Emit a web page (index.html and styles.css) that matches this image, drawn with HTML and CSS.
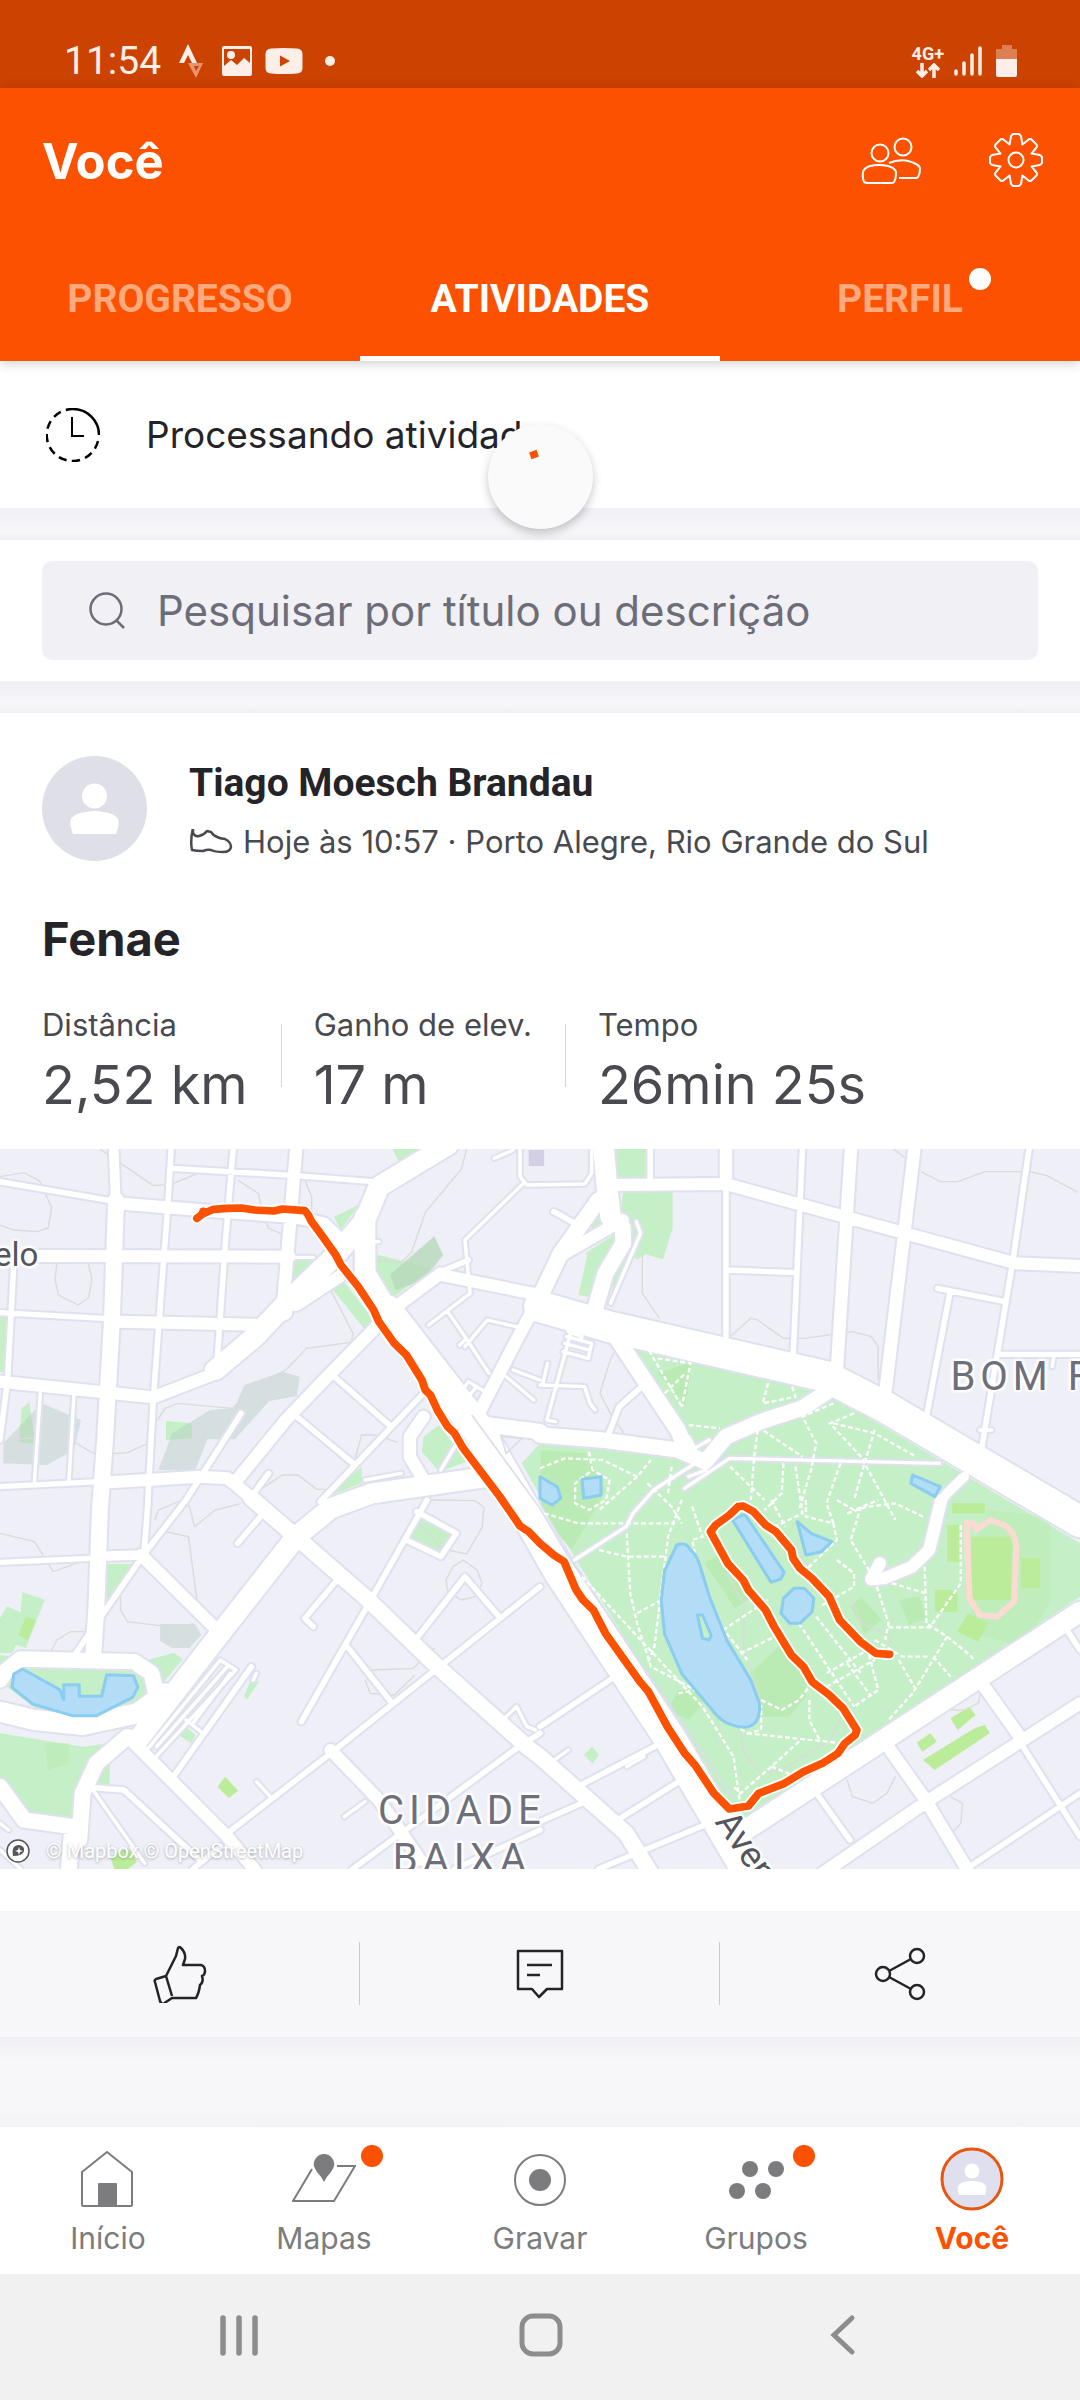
FILE: index.html
```
<!DOCTYPE html>
<html lang="pt-BR">
<head>
	<meta charset="utf-8">
	<meta name="viewport" content="width=device-width, initial-scale=1">
	<title>Você - Atividades</title>
	<link rel="stylesheet" href="styles.css">
</head>
<body>
<div class="app">

	<div class="status">
		<span class="clock">11:54</span>
		<svg class="ic-strava" width="24" height="34" viewBox="0 0 24 34"><path fill="#fdeee8" d="M9 0l9 19h-5L9 11l-4 8H0z"/><path fill="#e8936f" fill-rule="evenodd" d="M9 19h15l-7 15zm6 3l2 5 3-5z"/></svg>
		<svg class="ic-image" width="32" height="30" viewBox="0 0 32 30"><path fill="#fdeee8" fill-rule="evenodd" d="M3 0h26q2 0 2 2v26q0 2-2 2H3q-2 0-2-2V2q0-2 2-2zm0 3v17l7-6 6 5 7-7 6 5V3z"/><circle cx="10" cy="9" r="4" fill="#fdeee8"/></svg>
		<svg class="ic-tube" width="38" height="26" viewBox="0 0 38 26"><path fill="#fdeee8" fill-rule="evenodd" d="M6 0.500Q19-.5 32 .5 37.500 1 37.500 6v14q0 5-5.500 5.500-13 1-26 0Q.5 25 .5 20V6Q.5 1 6 .5zM15 7.500v11l10-5.500z"/></svg>
		<span class="more-dot"></span>
		<div class="status-right">
			<span class="net">4G+
				<svg width="24" height="15" viewBox="0 0 24 15"><path fill="none" stroke="#fdeee8" stroke-width="3.500" d="M6 0v12M1 8l5 5 5-5M18 15V3M13 7l5-5 5 5"/></svg>
			</span>
			<svg class="ic-signal" width="28" height="32" viewBox="0 0 28 32"><path stroke="#fdeee8" stroke-width="3.500" stroke-linecap="round" d="M2 26v3M10 18v11M18 10v19M26 3v26"/></svg>
			<svg class="ic-battery" width="22" height="34" viewBox="0 0 22 34"><path fill="#dd7f52" d="M6 1h10v4h4q1 0 1 1v10H0V6q0-1 1-1h5z"/><path fill="#fdeee8" d="M0 15h21v16q0 2-2 2H2q-2 0-2-2z"/></svg>
		</div>
	</div>

	<header class="header">
		<div class="top-row">
			<h1>Você</h1>
			<button class="icon-btn" aria-label="Amigos">
				<svg width="60" height="54" viewBox="1 2 60 54" fill="none" stroke="#fff" stroke-width="2"><circle cx="19" cy="20" r="8.500"/><circle cx="42" cy="14" r="8.500"/><path d="M4 50Q1 47 2 39q1-4 7-6 9-2 18 0 7 2 8 6 0 7-2 10-1 1-2 1H6q-1 0-2-1M28 30q14-6 27 1 4 2 4 5 0 5-2 8-1 1-2 1H38"/></svg>
			</button>
			<button class="icon-btn" aria-label="Configurações">
				<svg width="54" height="54" viewBox="-26 -25 54 54" fill="none" stroke="#fff" stroke-width="2" stroke-linejoin="round"><circle r="7.500"/><path d="M-6.400-15.500-5-24-3-26H3L5-24 6.400-15.500 12-20Q14-22 16-20L20-16Q22-14 20-12L15.500-6.400 24-5 26-3V3L24 5 15.500 6.400 20 12Q22 14 20 16L16 20Q14 22 12 20L6.400 15.500 5 24 3 26H-3L-5 24-6.400 15.500-12 20Q-14 22-16 20L-20 16Q-22 14-20 12L-15.500 6.400-24 5-26 3V-3L-24-5-15.500-6.400-20-12Q-22-14-20-16L-16-20Q-14-22-12-20Z"/></svg>
			</button>
		</div>
		<nav class="tabs">
			<a href="#progresso">PROGRESSO</a>
			<a href="#atividades" class="active">ATIVIDADES</a>
			<a href="#perfil"><span class="tab-label">PERFIL<i class="dot"></i></span></a>
		</nav>
	</header>

	<section class="processing">
		<svg width="54" height="54" viewBox="0 0 54 54" fill="none" stroke="#000" stroke-width="2.500"><path d="M27 1a26 26 0 0 1 26 26"/><path stroke-dasharray="8.200 5.400" d="M52 33A26 26 0 1 1 27 1"/><path stroke-width="2" d="M26 9v19h12"/></svg>
		<span>Processando atividade</span>
		<div class="spinner"><i></i></div>
	</section>

	<div class="gap"></div>

	<form class="search">
		<label class="search-box">
			<svg width="36" height="38" viewBox="0 0 36 38" fill="none" stroke="#6d6d78" stroke-width="2.500"><circle cx="17" cy="17" r="15.500"/><path d="M27 28l8 8"/></svg>
			<input type="text" aria-label="Pesquisar" placeholder="Pesquisar por título ou descrição">
		</label>
	</form>

	<div class="gap"></div>

	<article class="card">
		<div class="card-head">
			<svg class="avatar" viewBox="0 0 105 105"><circle cx="52.500" cy="52.500" r="52.500" fill="#dfdfe8"/><circle cx="52.500" cy="40" r="12.500" fill="#fff"/><path fill="#fff" d="M31 78q-4-10-2-15 4-7 23.500-8Q72 56 76 63q2 5-2 15z"/></svg>
			<div>
				<h2>Tiago Moesch Brandau</h2>
				<p class="when">
					<svg width="44" height="26" viewBox="0 0 44 26" fill="none" stroke="#494950" stroke-width="2.500" stroke-linejoin="round"><path d="M4 4q2 4 6 3 5-1 8-5l4 1q4 6 14 7 6 3 6 8-1 5-8 5-8 0-12-2-3-1-8 1-7 0-11-1-2-9 1-22z"/></svg>
					<span>Hoje às 10:57 · Porto Alegre, Rio Grande do Sul</span>
				</p>
			</div>
		</div>
		<h3>Fenae</h3>
		<dl class="stats">
			<div><dt>Distância</dt><dd>2,52 km</dd></div>
			<div><dt>Ganho de elev.</dt><dd>17 m</dd></div>
			<div><dt>Tempo</dt><dd>26min 25s</dd></div>
		</dl>
	</article>

	<div class="map">
		<svg viewBox="0 27 3136 2160" preserveAspectRatio="none">
			<!-- parks -->
			<g class="park">
				<path d="M1838 615L2410 765 2810 1010 3136 1210V1370L2150 2050 1673 1260 1515 970 1568 910 1950 950 2000 900z"/>
				<path d="M1785 27h95v90h-95zM1810 150h143v115l-28 93-50-15-25 15-60-50zM1755 180l-45 80 30 10zM1700 340l90-60-80 190-30-5 25-120zM1800 300l40-60 20 60-90 200z"/>
				<path d="M1140 27h75l-55 45zM970 230l70-35-50 75zM850 360h80l-80 85zM960 440l35-20 90 120-25 30zM1080 340l170 45-110 90-60-60zM1230 890l45-35 80 110-80 30-50-60zM1050 980v50l-100 40zM0 525h22l-8 170H0zM55 905l8-100 22-18 18 125zM482 843l75 7v45l-75 5z"/>
				<path d="M65 1357l65 22-55 145-28-10-12 25H0v-105l20-35 40 18zM0 1545l40 5-40 40zM310 1272h75l-75 110zM430 1560l75-22 25 20-60 75zM1215 1135l95 45-35 55-85-40zM708 1670l20-50 24 5-34 53zM518 1785l22-25 27 25-10 25zM275 1930l45-75-2 78z"/>
				<path d="M0 1780l240 40 80-10-80 110-15 120-60 0-70-15L0 1910z"/>
				<path d="M20 1640l30-70 130-10 190 20 65 50-40 80-140 40-120-20z"/>
				<path d="M1695 1845l25-25 20 25-20 25z"/>
			</g>
			<g class="wood">
				<path d="M1570 930l130 10 60 110-100 180-90-110zM1910 700l100-35-20 130z"/>
				<path d="M2180 1600l90-90 70 100v60l-50 60-90 0zM2045 1270l50-30 90 130-50 35zM2610 1380l60-10 20 65-50 20zM2470 1400l30-30 60 70-50 40zM1970 1650l60 0 10 40-40 50-60-30z"/>
				<path d="M2870 1110l180 20v250l-80 140-140-40-30-200z" opacity=".6"/>
				<path d="M1135 400l125-110 25 55-60 80-80 25zM130 1810h70v60l-60 20z" opacity=".7"/>
			</g>
			<g class="shade">
				<path d="M1132 405l130-117 25 57-55 75-82 30zM460 990l40-110 110-70 70-5 30-70 110-40 50 15-8 58-80 15-100 115h-80l-35 92zM10 910l110-120 115 50-20 90-80 45-125-5zM465 1452h100l20 32-35 40h-50l-35-22z"/>
			</g>
			<g class="pitch">
				<path d="M2765 1090h95v30h-95zM2750 1155h35v110h-35zM2715 1350h65v65h-65zM2820 1190h120l-5 190h-115zM2965 1255h55v90h-55zM2810 1420l60 30-30 55-60-30z"/>
				<path d="M2760 1735l55-35 18 25-52 45zM2662 1808l40-28 18 25-42 30zM2680 1860l150-95 30-10 14 25-160 110z"/>
				<path d="M75 1430l28 10-22 60-27-15zM632 1940l22-30 37 42-27 22zM320 2150l50-25 28 40-30 25h-35z"/>
			</g>

			<!-- contour lines -->
			<path class="contour" d="M290 27l70 50 85 60 55-5 80-35M0 110l70-12 45 25 35 80-10 60-30 12-70-5-40-15M165 370l-5 50 10 45 57 30 30-22 10-55-10-45M690 120l60 40 15 70 15 35 35 15M885 120l20 50v60M1355 27l-15 60-105 130-40 120-30 30-90-5M960 450l65 130-5 27-130 18-60 65-80 45-75 70-160-15-35 15-30 45M1030 960l20-75h40l65 22M740 1060l80-55h45l55 43h50M20 900l160-15 100 60 90-7 65-30M2595 27l30 25 35 22M2675 95l55 30 50 0 80-30h130l50 12 90 50M1865 340v120l50 75M2120 590l60-55 20 5 75 55h60l140-20 55 15 20 30v100M1787 630l-15 30-30 100 30 60 40 60M0 1180l100 25 55 90 80-30M450 1140l10-30 70-30 20 20 15 60 60-50 70-18M480 1175l67 15 25 190M350 1350v60l20 35 160 20 30-15M150 1530l15-30 40-25h45M1250 1080l130 2 25 20-5 60-45 80-70-15-80-90M1295 1320l20-40 30-20 40 30 15 40-20 40-40 10-40-25zM1080 1590l120-5 60-60M1060 1620l15 40 70 5 60-60M2730 1690l10 20 60 0 40-20 40-170M2460 1920l15 50 60 20 40-30 25-50M2760 1970l35 20-5 60-35 40M2150 1780l10 60 50 60 60-10 140-90 30-60M2110 1300l50 90v140l50 160M2310 1220l120 200M2470 1370l30 80 90 40-10 30"/>

			<!-- street network, drawn once as casing and once as fill -->
			<defs>
				<g id="streets">
					<path class="w90" d="M1568 500L1768 560 2400 710 2568 800 3136 1145M1120 510L1390 870 1628 1300 1948 1800 2168 2187"/>
					<path class="w60" d="M1300 15L1100 140 1060 240 980 340 840 480 740 590 625 690M1060 230L1060 400 1130 520M400 1800L640 1480 860 1190 960 1105 1080 1060 1420 1010M0 1715L100 1740 240 1755 400 1720 480 1660M2150 2080L3136 1415M1753 27L1763 150 1773 230"/>
					<path class="w48" d="M337 180L325 540 305 900 290 1110 280 1400 270 1560M1738 180L1628 340 1568 470M1808 260L1810 310 1758 400 1730 500M1788 590L1968 870 1998 940M0 1940L70 2040 210 2060 200 2187M370 1790L280 1870 240 1960 230 2100M730 1075L870 1200 1070 1380 1260 1570 1530 1820 1568 1850 1818 2080 1890 2200M1568 885L1748 900 1968 930 2048 965 2108 890 2208 845 2328 805 2410 750M1385 850L1568 875M0 1620L20 1590 60 1557 390 1565 440 1600 455 1670"/>
					<path class="w40" d="M2388 2200L2698 1980 3136 1690M2578 1820L2688 1980 2808 2187M2858 1640L2968 1800M625 700L445 772 0 725M860 495L1000 400M340 190L640 215 860 232 940 250 1000 310M1230 830L1190 890 1190 950 1230 1020M410 1245L620 1460M860 27L838 300 820 520M345 545L760 555 830 520M95 348L840 350M1280 400L1150 500 960 700 830 840 680 1030 860 1190M680 1030L660 1015 580 1010 320 1027M1280 405L1568 465M1568 470L1500 600 1385 830M1768 135L2108 132 2468 235 2948 370 3136 378M2108 27V130M2471 27L2430 690M2655 27L2568 780M960 1830L1100 1980 1220 2160M380 1800L660 2090 740 2190M1808 240L1690 310 1640 340"/>
					<path class="w40" d="M2733 1080L2698 1230 2648 1280 2568 1315 2530 1318 2555 1270"/>
					<path class="w28" d="M330 27L337 200M310 1248L410 1245M2735 1080L2750 1060 2800 1010"/>
					<path class="w16" d="M0 125L320 182M497 27L487 200 465 500 445 780 428 1110 418 1240M677 27L655 300 628 700M500 85L860 107 1110 127M0 518L300 535M0 1040L290 1025M0 1267L260 1255M540 1080L420 1240M400 1270L300 1420 220 1540M700 820L540 1080M780 1000L730 1070M660 2080L960 1840 1568 1340M1020 2190L1500 1825 1568 1780M690 1210L760 1125M975 1325L885 1435 910 1460M1240 1080L1060 1410 875 1745M1210 1115L1325 1180 1280 1250 1180 1200M1005 1515L1135 1685M1210 1495L1350 1310 1445 1425M965 705L1130 855M850 820L1025 970M930 1085L1225 765M40 370L22 720 0 900M270 1943L360 1950 580 2160M500 1915L730 1580M2108 130V590M2330 27L2303 650M2988 27L2943 350 2848 940M2113 390L2313 398M2723 445L2918 485M2758 460L2688 840M2898 643H3136M1888 27V120M1768 880L1798 800 1858 745M2958 1800L3136 2090M3098 1470L3136 1530M2378 1970L2468 2100M2823 2175L3078 2000 3136 1960M1568 1760L1778 1615M1678 1940L1918 1810M1793 2040L1978 1920M1568 2045L1688 1990M1738 2187L2058 2050M1320 2187L1568 2070M1280 395L1360 360M560 2187L640 2120M1608 215L1678 255"/>
					<path class="w10" d="M1080 305H1100M850 352H910M1510 27V110L1530 135 1698 132 1718 100V27M1520 130L1350 300 1365 460 1245 555M1300 515L1350 590 1420 700M1335 615L1350 600M1350 620L1415 540 1500 560M1435 55L1490 30M1490 690L1568 720M1470 710L1550 780M117 760L100 1025M215 760L200 1025M1658 575L1588 840 1613 845M1650 575L1690 590 1685 600M1645 590L1718 610 1708 655 1635 635M1640 610L1710 630M1568 735L1698 740 1713 790 1728 810M1590 670L1575 735M1848 245L1860 280 1773 490M430 1825L640 1560 685 1590 440 1865M455 1820L660 1580M560 1750L670 1600M540 1740L590 1780M270 1950L420 2170M745 1925L785 1970M1000 2030L1060 1985M745 1600L735 1620M1330 770L1360 725 1400 750M1345 785L1385 740M1060 1020L1165 1000M1280 990L1320 920M1988 1045L2118 955 2728 970M2018 970L1898 1050 1838 1120 1818 1160 1668 1260M2000 890L2050 990 2000 1010M1990 940L2060 900M1590 1875L1650 1830M1820 1880L1870 1850M2845 870H2880M3060 650L3055 680M0 2050L25 2070M0 2130L60 2187M1470 1730L1500 1700 1530 1760 1555 1770"/>
				</g>
				<path id="route" d="M572 235L588 222 590 214 588 222 620 208 660 205 700 204 740 210 795 213 820 207 885 212 895 225 905 245 930 280 975 345 990 375 1040 440 1085 510 1100 545 1145 610 1180 645 1225 720 1235 750 1250 765 1270 810 1300 860 1320 880 1345 925 1450 1068 1510 1158 1535 1175 1568 1210 1608 1245 1638 1265 1673 1350 1693 1380 1723 1410 1758 1480 1858 1625 1883 1655 1938 1760 1988 1840 2018 1875 2073 1960 2118 2007 2173 1998 2203 1960 2278 1930 2333 1895 2388 1870 2433 1840 2453 1810 2483 1785 2488 1770 2448 1705 2408 1665 2358 1625 2333 1580 2298 1545 2248 1460 2223 1410 2173 1350 2158 1320 2113 1270 2063 1175 2078 1155 2118 1125 2143 1100 2158 1098 2188 1115 2223 1155 2253 1175 2298 1230 2303 1255 2323 1285 2358 1315 2408 1370 2438 1440 2498 1505 2543 1540 2583 1543"/>
			</defs>
			<use href="#streets" class="casing"/>
			<use href="#streets" class="fill"/>
			<path class="median" d="M1370 825L1568 1105 1650 1250 2130 1975M1455 890l60 5-45 45z"/>

			<!-- footpaths -->
			<path class="foot" d="M1885 632L1980 800M1910 655L2005 670 1980 800M1930 760L1990 700M2230 730L2215 790 2310 770 2300 740M2000 855L2090 865M2420 790L2330 830 2370 910 2355 990 2320 1110M2420 850L2540 880 2660 950M2480 820L2410 850 2500 950 2600 1140M2200 860L2330 950M2200 870L2190 950 2180 1080M2540 870L2510 970 2480 1080M2120 980L2220 1080M2275 970L2270 1060 2220 1110M2310 980L2330 1120 2250 1160M2440 970L2400 1090 2420 1150"/>
			<path class="foot" d="M1568 985L1640 955 1750 960 1850 1010 1890 960M1710 935L1720 990 1670 1030 1670 1090 1710 1110 1760 1080 1770 1020 1720 990M1850 1010L1740 1110M1880 1030L1950 1100 1980 1150M1950 980L1940 1060M1580 1120L1680 1150H1960M1740 1230L1820 1250H1930M1980 1080L1940 1190 1900 1520 1880 1570M1820 1180L1830 1360 1850 1450 1890 1580 2020 1650 1970 1660M1690 1310L2040 1700 2130 1850 2150 2000M1920 1380L1850 1420M2010 1100L2040 1190 2010 1200 2050 1400 2120 1530 2210 1700 2210 1770 2170 1780 2110 1740 2010 1640 1930 1480"/>
			<path class="foot" d="M2240 1080L2280 1160M2340 1080V1130L2420 1150 2430 1200 2390 1240 2340 1290M2460 1120L2520 1100 2600 1090 2680 1130M2500 1100L2470 1200 2540 1320 2580 1450 2570 1500M2430 1260L2480 1300 2480 1340 2380 1400M2580 1462H2700L2790 1330V1150M2685 1280L2690 1450 2750 1490 2810 1540 2830 1560M2750 1490L2650 1660 2580 1740M2710 1550L2760 1610M2540 1500L2620 1550H2700M2610 1560L2660 1650M2320 1450L2480 1700M2370 1430L2500 1600M2400 1600L2520 1530 2550 1650 2480 1700M2400 1640L2540 1560M2460 1570L2530 1670M2100 1470L2230 1380M2150 1540L2250 1490M2110 1480L2170 1560M2210 1680L2270 1710 2320 1680 2350 1640M2170 1780L2430 1808M2350 1680V1740L2380 1800M2320 1805L2240 1880 2150 1960 2130 1940M2240 1880L2290 1900M2590 1330L2690 1360M2430 1080L2480 1110 2550 1080"/>

			<g class="water">
				<path d="M1965 1215q30-10 40 15 15 10 25 40l30 100 50 130 70 120 25 70q5 70-45 72-60-5-90-50l-90-110-50-120-10-100 10-90z"/>
				<path d="M2127 1140l35-18 115 175-10 20-28 10zM2275 1375l30-30h30l28 30-5 40-35 35h-30l-25-30zM2315 1145l40 35 60 25-30 30-45 10z"/>
				<path d="M1690 1018l55-8v55l-50 10zM1568 1010l50 30 10 35-25 20-35-20zM2650 1005l80 35-15 30-70-40z"/>
				<path d="M65 1587l-25 15-5 40 60 50 115 35h70l105-55 15-30-12-35-78-3-15 65h-65v-35h-45v45l-12-30z"/>
				<path d="M2025 1425l15 0 25 60-5 15-20-5z" class="isle"/>
			</g>
			<path class="track" d="M2808 1180V1150H2826L2836 1168 2876 1140 2916 1155 2941 1180 2951 1215 2945 1385 2895 1430 2845 1425 2815 1375z"/>

			<use href="#route" class="route-case"/>
			<use href="#route" class="route"/>
			<path fill="#d3cfe4" d="M1535 30h45v48h-45z"/>
		</svg>
		<span class="place elo">elo</span>
		<span class="place bom">BOM&nbsp;F</span>
		<span class="place cidade">CIDADE<br>BAIXA</span>
		<span class="place aven">Aven</span>
		<div class="credit">
			<svg width="24" height="24" viewBox="0 0 24 24"><circle cx="12" cy="12" r="11" fill="#fff" stroke="#55555c" stroke-width="1.500"/><path fill="#55555c" d="M7 17q-2-11 6-11 6 1 5 6-1 5-11 5z"/><path fill="#fff" d="M13 8l1 3 3 1-3 1-1 3-1-3-3-1 3-1z"/></svg>
			<span>© Mapbox © OpenStreetMap</span>
		</div>
	</div>

	<div class="actions">
		<button aria-label="Curtir">
			<svg width="54" height="58" viewBox="0 0 54 58" fill="none" stroke="#242428" stroke-width="2.500" stroke-linejoin="round"><path d="M13 31l10-20 2-8q1-2 3 0 5 5 4 11l-2 6h18q4 1 4 6 0 4-3 5 2 6-2 9-1 8-4 13H19l-9 6q-2 0-3-3L2 37q-1-2 1-3zM13 31l6 20"/></svg>
		</button>
		<button aria-label="Comentar">
			<svg width="48" height="50" viewBox="0 0 48 50" fill="none" stroke="#242428" stroke-width="2.500" stroke-linejoin="round"><path d="M2 2h44v38H31l-8 8-7-8H2zM11 16h25M11 26h13"/></svg>
		</button>
		<button aria-label="Compartilhar">
			<svg width="52" height="54" viewBox="0 0 52 54" fill="none" stroke="#242428" stroke-width="2.500"><circle cx="9" cy="27" r="7"/><circle cx="43" cy="9" r="7"/><circle cx="43" cy="45" r="7"/><path d="M15 24l22-12M15 30l22 12"/></svg>
		</button>
	</div>

	<div class="rest"></div>

	<nav class="bottom-nav">
		<a href="#inicio">
			<svg width="64" height="64" viewBox="0 0 64 64" fill="none" stroke="#7c7c7e" stroke-width="2" stroke-linejoin="round"><path d="M6 25L31 5l25 20v33q0 1-1 1H7q-1 0-1-1z"/><path fill="#7c7c7e" d="M23 37h17v22H23z"/></svg>
			<span>Início</span>
		</a>
		<a href="#mapas">
			<svg width="64" height="64" viewBox="0 0 64 64" fill="none" stroke="#7c7c7e" stroke-width="2"><path d="M20 22L1 54h41l21-35H45"/><path fill="#7c7c7e" stroke="none" d="M32 35q-3-6-7-10-6-8-1-14 3-4 8-4t8 4q5 6-1 14-4 4-7 10z"/></svg>
			<i class="badge"></i>
			<span>Mapas</span>
		</a>
		<a href="#gravar">
			<svg width="64" height="64" viewBox="0 0 64 64"><circle cx="32" cy="33" r="25" fill="none" stroke="#7c7c7e" stroke-width="2"/><circle cx="32" cy="33" r="11" fill="#7c7c7e"/></svg>
			<span>Gravar</span>
		</a>
		<a href="#grupos">
			<svg width="64" height="64" viewBox="0 0 64 64" fill="#7c7c7e"><circle cx="26" cy="22" r="8"/><circle cx="52" cy="22" r="8"/><circle cx="13" cy="44" r="8"/><circle cx="39" cy="44" r="8"/></svg>
			<i class="badge"></i>
			<span>Grupos</span>
		</a>
		<a href="#voce" class="current">
			<svg width="64" height="64" viewBox="0 0 64 64"><circle cx="32" cy="32" r="30" fill="#dfdfee" stroke="#e8560f" stroke-width="3"/><circle cx="32" cy="24" r="7.500" fill="#fff"/><path fill="#fff" d="M19 48q-2-6-1-9 3-5 14-5t14 5q1 3-1 9z"/></svg>
			<span>Você</span>
		</a>
	</nav>

	<div class="system-nav">
		<button aria-label="Recentes"><svg width="40" height="42" viewBox="0 0 40 42"><path stroke="#8d8d8d" stroke-width="5.500" stroke-linecap="round" d="M4 4v35M20 4v35M36 4v35"/></svg></button>
		<button aria-label="Tela inicial"><svg width="44" height="44" viewBox="0 0 44 44"><rect x="3" y="3" width="38" height="38" rx="11" fill="none" stroke="#8d8d8d" stroke-width="5"/></svg></button>
		<button aria-label="Voltar"><svg width="26" height="42" viewBox="0 0 26 42"><path fill="none" stroke="#8d8d8d" stroke-width="5" stroke-linecap="round" d="M22 4L4 21l18 17"/></svg></button>
	</div>

</div>
</body>
</html>
```
FILE: styles.css
```
* {
	box-sizing: border-box;
}

body {
	margin: 0;
	font-family: Inter, Roboto, "Liberation Sans", sans-serif;
	color: #242428;
	background-color: #f7f7fa;
}

h1, h2, h3, p, dl, dd {
	margin: 0;
}

a {
	text-decoration: none;
	color: inherit;
}

button {
	padding: 0;
	border: 0;
	background: none;
	font: inherit;
}

svg {
	display: block;
	flex-shrink: 0;
}

.app {
	display: flex;
	flex-direction: column;
	min-height: 100vh;
}

/* status bar */
.status {
	display: flex;
	align-items: center;
	height: 88px;
	padding: 34px 62px 0 64px;
	background-color: #cc4200;
	color: #fdeee8;
	font-family: Roboto, sans-serif;
}

.clock {
	font-size: 39px;
	line-height: 44px;
}

.ic-strava {
	margin-left: 18px;
}

.ic-image {
	margin-left: 18px;
}

.ic-tube {
	margin-left: 12px;
}

.more-dot {
	width: 10px;
	height: 10px;
	margin-left: 22px;
	border-radius: 50%;
	background-color: #fdeee8;
}

.status-right {
	display: flex;
	align-items: center;
	margin-left: auto;
}

.net {
	display: flex;
	flex-direction: column;
	align-items: center;
	font-size: 18px;
	line-height: 18px;
	font-weight: bold;
}

.ic-signal {
	margin-left: 10px;
}

.ic-battery {
	margin-left: 14px;
}

/* orange header */
.header {
	position: relative;
	z-index: 1;
	background-color: #fc5200;
	color: #fff;
	box-shadow: 0 2px 12px rgba(0, 0, 0, 0.2);
}

.top-row {
	display: flex;
	align-items: center;
	height: 148px;
	padding: 0 36px 0 42px;
}

.top-row h1 {
	flex: 1;
	font-size: 49px;
	line-height: 60px;
}

.icon-btn {
	margin-left: 68px;
}

.icon-btn svg {
	overflow: visible;
}

.tabs {
	display: grid;
	grid-template-columns: repeat(3, 1fr);
	height: 125px;
	font-family: Roboto, sans-serif;
	font-size: 39px;
	line-height: 127px;
	font-weight: bold;
	text-align: center;
}

.tabs a {
	height: 125px;
	color: #ffa97f;
	border-bottom: 5px solid transparent;
}

.tabs .active {
	color: #fff;
	border-bottom-color: #fff;
}

.tab-label {
	position: relative;
}

.dot {
	position: absolute;
	top: -8px;
	right: -28px;
	width: 22px;
	height: 22px;
	border-radius: 50%;
	background-color: #fff;
}

/* upload in progress */
.processing {
	position: relative;
	display: flex;
	align-items: center;
	gap: 46px;
	height: 147px;
	padding: 0 46px;
	background-color: #fff;
	font-size: 37px;
}

.spinner {
	position: absolute;
	left: 50%;
	top: 63px;
	width: 105px;
	height: 105px;
	margin-left: -52px;
	border-radius: 50%;
	background-color: #fafafa;
	box-shadow: 0 4px 10px rgba(0, 0, 0, 0.22);
	z-index: 1;
}

.spinner i {
	position: absolute;
	left: 42px;
	top: 27px;
	width: 8px;
	height: 7px;
	background-color: #fc5200;
	transform: rotate(-20deg);
}

.gap {
	height: 32px;
	background: linear-gradient(#f0f0f5, #f7f7fa 75%, #f0f0f4);
}

/* search */
.search {
	padding: 21px 42px;
	background-color: #fff;
}

.search-box {
	display: flex;
	align-items: center;
	gap: 32px;
	height: 99px;
	padding: 0 47px;
	border-radius: 10px;
	background-color: #f0f0f5;
}

.search-box input {
	flex: 1;
	min-width: 0;
	padding: 0;
	border: 0;
	outline: 0;
	background: none;
	font-family: inherit;
	font-size: 42px;
	color: #242428;
}

.search-box input::placeholder {
	color: #6d6d78;
	opacity: 1;
}

/* activity */
.card {
	padding: 43px 42px 32px;
	background-color: #fff;
}

.card-head {
	display: flex;
	gap: 42px;
}

.avatar {
	width: 105px;
	height: 105px;
}

.card h2 {
	font-family: Roboto, sans-serif;
	font-size: 39px;
	line-height: 54px;
}

.when {
	display: flex;
	align-items: center;
	gap: 10px;
	margin-top: 6px;
	font-size: 31px;
	line-height: 52px;
	color: #494950;
}

.card h3 {
	margin-top: 41px;
	font-size: 47px;
	line-height: 60px;
}

.stats {
	display: flex;
	margin-top: 36px;
	color: #494950;
}

.stats div {
	position: relative;
	margin-right: 66px;
}

.stats div + div::before {
	content: "";
	position: absolute;
	left: -33px;
	top: 19px;
	width: 1px;
	height: 63px;
	background-color: #d5d5da;
}

.stats dt {
	font-size: 31px;
	line-height: 40px;
}

.stats dd {
	margin-top: 8px;
	font-size: 54px;
	line-height: 64px;
}

/* map */
.map {
	position: relative;
	overflow: hidden;
	background-color: #eeeff7;
	font-family: Roboto, sans-serif;
}

.map > svg {
	width: 100%;
	height: auto;
	aspect-ratio: 3 / 2;
}

.park { fill: #c5efc6; }
.wood { fill: #bbebb5; }
.shade { fill: #b6c9c0; opacity: 0.42; }
.pitch { fill: #bbec9a; }

.contour {
	fill: none;
	stroke: #dcdadb;
	stroke-width: 4px;
}

.casing {
	stroke: #dfe1ee;
	--case: 12;
}

.fill {
	stroke: #fff;
	--case: 0;
}

#streets path {
	fill: none;
	stroke-linejoin: round;
	stroke-linecap: round;
	stroke-width: calc((var(--w) + var(--case)) * 1px);
}

.w90 { --w: 92; }
.w60 { --w: 60; }
.w48 { --w: 46; }
.w40 { --w: 36; }
.w28 { --w: 28; }
.w16 { --w: 16; }
.w10 { --w: 10; }

.median {
	fill: none;
	stroke: #dcdeec;
	stroke-width: 5px;
}

.foot {
	fill: none;
	stroke: #fff;
	stroke-width: 7px;
	stroke-dasharray: 14 8;
}

.water path {
	fill: #b3ddf6;
	stroke: #8bcdf0;
	stroke-width: 9px;
	stroke-linejoin: round;
}

.water .isle {
	fill: #c5efc6;
}

.track {
	fill: none;
	stroke: #fbdad2;
	stroke-width: 18px;
}

.route,
.route-case {
	fill: none;
	stroke-linejoin: round;
	stroke-linecap: round;
}

.route-case {
	stroke: #fff;
	stroke-width: 34px;
}

.route {
	stroke: #fc5200;
	stroke-width: 23px;
}

/* labels pinned on the map */
.place {
	position: absolute;
	color: #6f6f7c;
	font-size: 40px;
	line-height: 48px;
	letter-spacing: 5px;
	text-shadow: 0 0 4px #fff, 2px 2px 2px #fff, -2px -2px 2px #fff, 2px -2px 2px #fff, -2px 2px 2px #fff;
	white-space: nowrap;
}

.elo {
	left: -6px;
	top: 82px;
	font-size: 33px;
	letter-spacing: 0;
	color: #55555c;
}

.bom {
	left: 88%;
	top: 204px;
}

.cidade {
	left: 35%;
	top: 638px;
	text-align: center;
}

.aven {
	left: 67%;
	top: 642px;
	font-size: 36px;
	letter-spacing: 0;
	color: #55555c;
	transform: rotate(55deg);
	transform-origin: 0 50%;
}

.credit {
	position: absolute;
	left: 6px;
	bottom: 6px;
	display: flex;
	align-items: center;
	gap: 16px;
	color: #fff;
	font-size: 20px;
	text-shadow: 0 1px 3px rgba(0, 0, 0, 0.3);
}

/* kudos, comment, share */
.actions {
	display: grid;
	grid-template-columns: repeat(3, 1fr);
	height: 126px;
	margin-top: 42px;
	background-color: #f7f7fa;
	box-shadow: 0 -42px 0 #fff;
}

.actions button {
	position: relative;
	display: flex;
	align-items: center;
	justify-content: center;
}

.actions button + button::before {
	content: "";
	position: absolute;
	left: -1px;
	top: 31px;
	width: 1px;
	height: 63px;
	background-color: #c9c9ce;
}

.rest {
	flex: 1;
	min-height: 60px;
	background: linear-gradient(#f0f0f4, #f7f7fa 24px, #f7f7fa 80%, #f2f2f5);
}

/* bottom navigation */
.bottom-nav {
	display: grid;
	grid-template-columns: repeat(5, 1fr);
	height: 147px;
	padding-top: 20px;
	background-color: #fff;
	color: #7c7c7e;
	font-size: 30px;
	line-height: 42px;
}

.bottom-nav a {
	position: relative;
	display: flex;
	flex-direction: column;
	align-items: center;
	gap: 6px;
}

.badge {
	position: absolute;
	left: 50%;
	top: -2px;
	width: 22px;
	height: 22px;
	margin-left: 37px;
	border-radius: 50%;
	background-color: #fc5200;
}

.bottom-nav .current {
	color: #fc5200;
	font-weight: bold;
}

.system-nav {
	display: grid;
	grid-template-columns: repeat(3, 1fr);
	justify-items: center;
	height: 126px;
	padding: 0 86px 4px 88px;
	background-color: #f1f1f1;
}
```
